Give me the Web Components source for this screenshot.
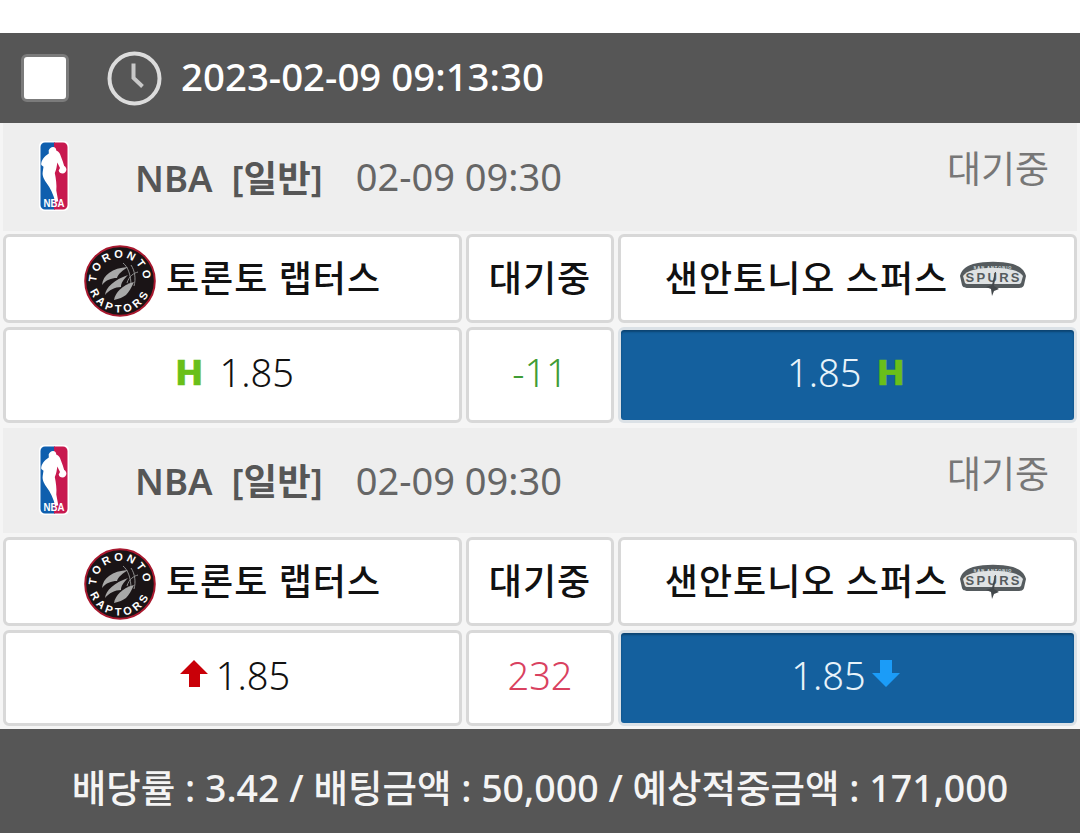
<!DOCTYPE html>
<html lang="ko">
<head>
<meta charset="utf-8">
<title>bet slip</title>
<style>
html,body{margin:0;padding:0;background:#fff;}
body{font-family:"Noto Sans","Noto Sans CJK KR",sans-serif;width:1080px;height:833px;overflow:hidden;}
</style>
</head>
<body>
<bet-slip>
  <slip-header time="2023-02-09 09:13:30"></slip-header>
  <match-card league="NBA" kind="[일반]" date="02-09 09:30" status="대기중" home="토론토 랩터스" mid="대기중" away="샌안토니오 스퍼스" line="-11" line-color="#3f9c35" home-odds="1.85" away-odds="1.85" mark="h"></match-card>
  <match-card class="second" league="NBA" kind="[일반]" date="02-09 09:30" status="대기중" home="토론토 랩터스" mid="대기중" away="샌안토니오 스퍼스" line="232" line-color="#d9415f" home-odds="1.85" away-odds="1.85" mark="arrow"></match-card>
  <slip-footer>배당률 : 3.42 / 배팅금액 : 50,000 / 예상적중금액 : 171,000</slip-footer>
</bet-slip>

<script>
"use strict"
const FONT = `"Noto Sans","Noto Sans CJK KR",sans-serif`;

class NbaLogo extends HTMLElement{
    connectedCallback(){
        this.attachShadow({mode:"open"}).innerHTML = `
        <style>:host{display:block;width:32px;height:72px;} svg{display:block;}</style>
        <svg width="32" height="72" viewBox="0 0 32 72">
            <rect x="1" y="1" width="30" height="70" rx="5" fill="#fff"/>
            <path d="M7 2.5h10v67H7a4.500 4.500 0 0 1-4.500-4.500V7A4.500 4.500 0 0 1 7 2.500z" fill="#0f5fae"/>
            <path d="M16 2.500h9A4.500 4.500 0 0 1 29.500 7v58a4.500 4.500 0 0 1-4.500 4.500h-9z" fill="#c8194f"/>
            <path d="M15 7c2 0 3.500 1.500 3.200 3.600 1.300.6 3 1.600 3.800 3.400l2.800 7.600 1.400 4.400c1.300.6 2.200 2 2.200 3.600 0 2.200-1.700 4-3.900 4-2 0-3.500-1.300-3.800-3.100l1.300-2.600-2.700-5.300c-.5 4-1 7-2.500 10.500 1.100 5.600 2.100 12 1.500 17.500l2 10.900h-3.100c-1.700-7-5-13.700-8.500-18.300-2.300-3-4.700-7.300-4-11.200l.8-5.300-2.200-1.700c-.6-3.200 2-7.700 5.800-10.300l1.700-1.100-.1-3.400C11.600 8.700 13 7 15 7z" fill="#fff"/>
            <text x="16" y="66.500" text-anchor="middle" font-family="Liberation Sans, sans-serif" font-weight="700" font-size="10" fill="#fff" textLength="21" lengthAdjust="spacingAndGlyphs">NBA</text>
        </svg>`;
    }
}

class RaptorsLogo extends HTMLElement{
    connectedCallback(){
        this.attachShadow({mode:"open"}).innerHTML = `
        <style>:host{display:block;width:72px;height:72px;flex:none;margin-top:5px;} svg{display:block;}</style>
        <svg width="72" height="72" viewBox="0 0 72 72">
            <defs>
                <path id="top" d="M12.500 36a23.500 23.500 0 0 1 47 0"/>
                <path id="bot" d="M4.500 36a31.500 31.500 0 0 0 63 0"/>
            </defs>
            <circle cx="36" cy="36" r="34.800" fill="#1a1416" stroke="#a8182e" stroke-width="2"/>
            <text font-family="Liberation Sans, sans-serif" font-weight="700" font-size="11" fill="#fff" letter-spacing="3"><textPath href="#top" startOffset="50%" text-anchor="middle">TORONTO</textPath></text>
            <text font-family="Liberation Sans, sans-serif" font-weight="700" font-size="11" fill="#fff" letter-spacing="3.500"><textPath href="#bot" startOffset="50%" text-anchor="middle">RAPTORS</textPath></text>
            <path d="M47 20c4 6 5 14 3 21M54 27c-4 1-9 4-11 11M39 18c5 4 8 12 8 23" fill="none" stroke="#8f8f8f" stroke-width="1"/>
            <path d="M18 40c1-10 10-17 26-18-5 3-10 7-11 11-6 0-11 2-15 7z" fill="#a8a8a8"/>
            <path d="M21 50c1-8 9-15 23-20-5 5-7 8-7 12-6 0-12 3-16 8z" fill="#a8a8a8"/>
            <path d="M30 55c1-7 8-15 20-18-3 6-5 10-8 13-3 2-7 4-12 5z" fill="#a8a8a8"/>
        </svg>`;
    }
}

class SpursLogo extends HTMLElement{
    connectedCallback(){
        this.attachShadow({mode:"open"}).innerHTML = `
        <style>:host{display:block;width:68px;height:36px;flex:none;margin-top:1px;} svg{display:block;}</style>
        <svg width="68" height="36" viewBox="0 0 68 36">
            <path d="M1 15C3 7 9 5 14 3c13-3 27-3 40 0 5 2 11 4 13 12l-2 9c-1 3-4 3-7 3H10c-3 0-6 0-7-3z" fill="#555b5e"/>
            <path d="M4 15c2-3 6-5 10-6 13-3 27-3 40 0 4 1 8 3 10 6l-2 7c-1 1-2 1-4 1H10c-2 0-3 0-4-1z" fill="#dfe2e3"/>
            <text x="34" y="7.500" text-anchor="middle" font-family="Liberation Sans, sans-serif" font-weight="700" font-size="4" fill="#dfe2e3" letter-spacing="1">SAN ANTONIO</text>
            <text x="34" y="21" text-anchor="middle" font-family="Liberation Sans, sans-serif" font-weight="700" font-size="13" fill="#555b5e" textLength="55" lengthAdjust="spacing">SPURS</text>
            <path d="M36 11l-3 13-6 2 5 2 1 7 2-5 5-2-5-3 2-14z" fill="#43484b"/>
        </svg>`;
    }
}

class BetCell extends HTMLElement{
    connectedCallback(){
        this.attachShadow({mode:"open"}).innerHTML = `
        <style>
        :host{
            display:flex;
            align-items:center;
            justify-content:center;
            box-sizing:border-box;
            min-width:0;
            background:#fff;
            border:3px solid #d8d8d8;
            border-radius:6px;
            color:#111;
            font-family:${FONT};
        }
        :host([picked]){
            background:#14609e;
            color:#e8f3fa;
            border-color:#dbe1e6;
            box-shadow:inset 0 2px 2px #0c4472;
        }
        </style>
        <slot></slot>`;
    }
}

class SlipHeader extends HTMLElement{
    connectedCallback(){
        this.attachShadow({mode:"open"}).innerHTML = `
        <style>
        :host{
            display:flex;
            align-items:center;
            height:90px;
            margin-top:33px;
            padding-left:21px;
            background:#565656;
            color:#fff;
            font-family:${FONT};
        }
        .check{
            width:48px;
            height:48px;
            box-sizing:border-box;
            border:3px solid #7b7b7b;
            border-radius:6px;
            background:#fff;
        }
        svg{margin-left:38px;display:block;}
        .time{margin-left:19px;margin-bottom:4px;font-size:38.4px;line-height:44px;font-weight:500;white-space:nowrap;}
        </style>
        <span class="check"></span>
        <svg width="55" height="55" viewBox="0 0 55 55">
            <circle cx="27.500" cy="27.500" r="25" fill="none" stroke="#dcdcdc" stroke-width="4"/>
            <path d="M26.500 12.500v14.500l9 8.500" fill="none" stroke="#c8c8c8" stroke-width="4"/>
        </svg>
        <span class="time">${this.getAttribute('time')}</span>`;
    }
}

class MatchCard extends HTMLElement{
    mark(side){
        if(this.getAttribute('mark') === 'h'){
            return `<span class="h">H</span>`;
        }
        if(side === 'home'){
            return `<svg class="arrow" width="28" height="28" viewBox="0 0 28 28"><path d="M14 0l14 14h-8v13H9V14H0z" fill="#c90008"/></svg>`;
        }
        return `<svg class="arrow" width="28" height="28" viewBox="0 0 28 28"><path d="M14 27L0 13h8V0h12v13h8z" fill="#1b9cf8"/></svg>`;
    }

    connectedCallback(){
        const a = n => this.getAttribute(n);
        const isH = a('mark') === 'h';
        this.attachShadow({mode:"open"}).innerHTML = `
        <style>
        :host{display:block;padding:0 3px;background:#f5f5f5;font-family:${FONT};}
        :host(.second){padding-top:2px;}
        .league{
            display:flex;
            align-items:center;
            height:108px;
            box-sizing:border-box;
            padding-left:35px;
            padding-bottom:2px;
            background:#eee;
            color:#565656;
            position:relative;
        }
        :host(.second) .league{height:105px;}
        .name{margin-left:65px;font-size:36.5px;font-weight:600;white-space:pre;}
        .date{margin-left:33px;font-size:38px;color:#666;}
        .status{position:absolute;right:28px;top:21px;font-size:37px;line-height:50px;color:#777;}
        .grid{
            display:grid;
            grid-template-columns:1fr 148px 1fr;
            grid-template-rows:89px 96px;
            column-gap:4px;
            row-gap:4px;
            padding-top:3px;
            padding-bottom:3px;
        }
        :host(.second) .grid{padding-top:4px;}
        .team{font-size:36px;font-weight:500;gap:10px;letter-spacing:1px;white-space:nowrap;}
        .team span{margin-bottom:4px;}
        .team.away{gap:11px;padding-right:3px;}
        .odds{font-size:38px;font-weight:300;gap:16px;padding-left:4px;padding-bottom:7px;}
        .odds.picked{gap:15px;padding-left:0;padding-right:3px;}
        .arrows .odds{gap:8px;padding-left:5px;}
        .arrows .odds.picked{gap:6px;padding-left:0;padding-right:4px;}
        .line{font-size:38px;font-weight:300;padding-bottom:7px;}
        .h{font-family:"DejaVu Sans",sans-serif;font-weight:700;font-size:34px;line-height:34px;color:#69bf1a;-webkit-text-stroke:.6px #69bf1a;margin-top:3px;}
        .arrow{display:block;margin-bottom:2px;}
        </style>
        <div class="league">
            <nba-logo></nba-logo>
            <span class="name">${a('league')}  ${a('kind')}</span>
            <span class="date">${a('date')}</span>
            <span class="status">${a('status')}</span>
        </div>
        <div class="grid ${isH ? '' : 'arrows'}">
            <bet-cell class="team"><raptors-logo></raptors-logo><span>${a('home')}</span></bet-cell>
            <bet-cell class="team"><span>${a('mid')}</span></bet-cell>
            <bet-cell class="team away"><span>${a('away')}</span><spurs-logo></spurs-logo></bet-cell>
            <bet-cell class="odds">${this.mark('home')}<span>${a('home-odds')}</span></bet-cell>
            <bet-cell class="line" style="color:${a('line-color')}">${a('line')}</bet-cell>
            <bet-cell class="odds picked" picked><span>${a('away-odds')}</span>${this.mark('away')}</bet-cell>
        </div>`;
    }
}

class SlipFooter extends HTMLElement{
    connectedCallback(){
        this.attachShadow({mode:"open"}).innerHTML = `
        <style>
        :host{
            display:flex;
            flex:1;
            align-items:center;
            justify-content:center;
            padding-top:8px;
            background:#565656;
            color:#f4f4f4;
            font-family:${FONT};
            font-size:37.5px;
            font-weight:500;
            white-space:nowrap;
        }
        </style>
        <slot></slot>`;
    }
}

class BetSlip extends HTMLElement{
    connectedCallback(){
        this.attachShadow({mode:"open"}).innerHTML = `
        <style>
        :host{display:flex;flex-direction:column;width:1080px;height:833px;}
        </style>
        <slot></slot>`;
    }
}

customElements.define('nba-logo', NbaLogo);
customElements.define('raptors-logo', RaptorsLogo);
customElements.define('spurs-logo', SpursLogo);
customElements.define('bet-cell', BetCell);
customElements.define('slip-header', SlipHeader);
customElements.define('match-card', MatchCard);
customElements.define('slip-footer', SlipFooter);
customElements.define('bet-slip', BetSlip);
</script>
</body>
</html>
